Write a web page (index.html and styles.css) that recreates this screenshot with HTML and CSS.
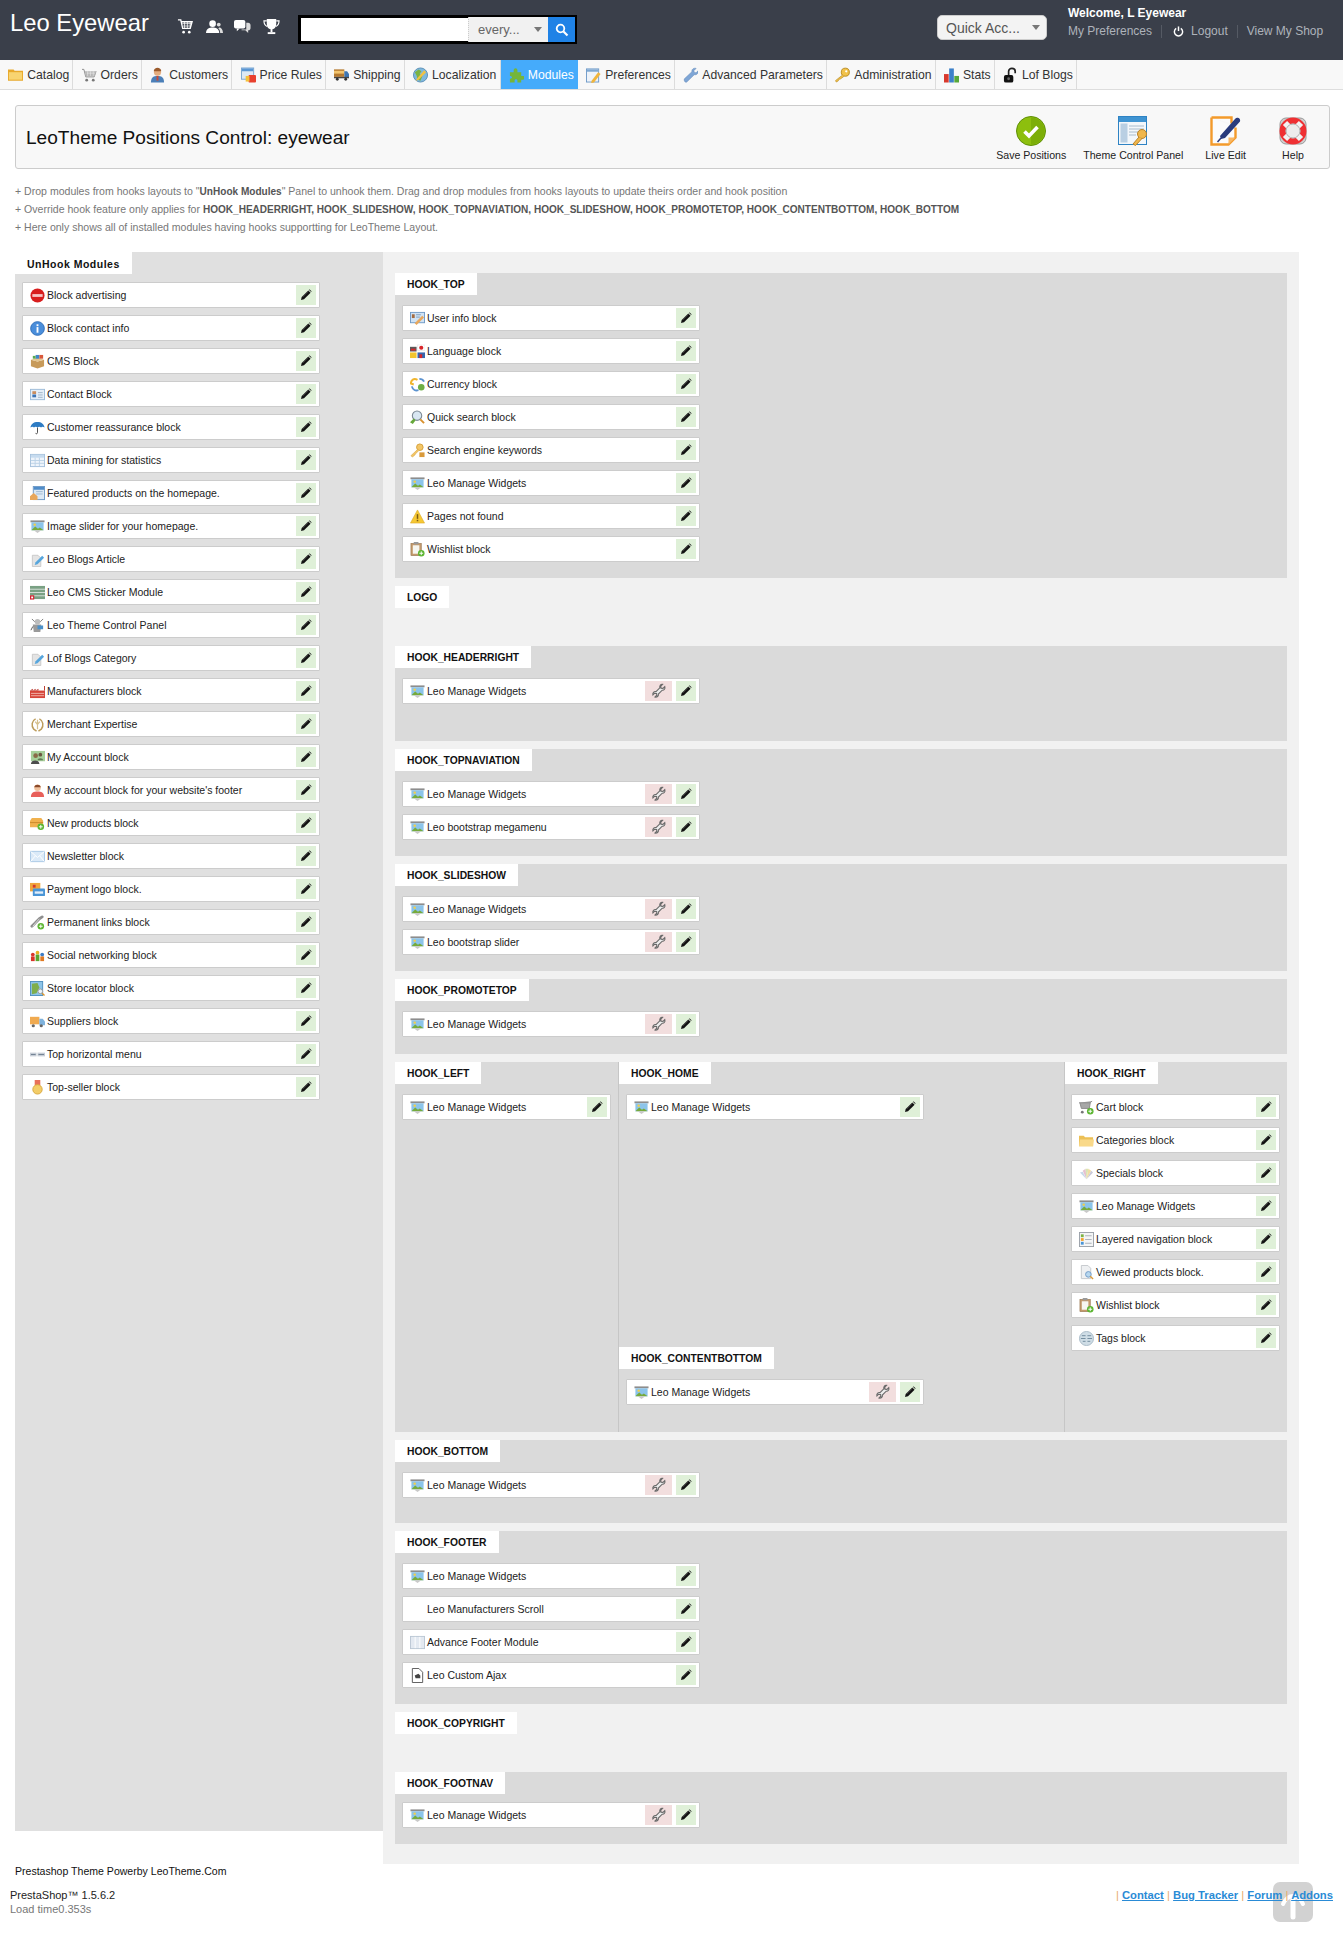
FILE: index.html
```html
<!DOCTYPE html>
<html lang="en">
<head>
  <meta charset="UTF-8">
  <title>LeoTheme Positions Control: eyewear</title>
  <link rel="stylesheet" href="styles.css">
</head>
<body>

<svg class="sprite" xmlns="http://www.w3.org/2000/svg">
  <symbol id="i-pencil" viewBox="0 0 12 12"><path d="M1 11l.7-3 6.6-6.6 2.3 2.3L4 10.3z" fill="#111"/><path d="M8.9.8l.8-.3 1.8 1.8-.3.8z" fill="#111"/><path d="M2.6 8.1l5.7-5.7" stroke="#777" stroke-width=".5"/></symbol>
  <symbol id="i-wrench" viewBox="0 0 16 16"><path d="M11.6 1.4L9.8 3.2l.2 2 2 .2 1.8-1.8c.6 2-.6 3.8-2.6 3.6L7.4 11c.3 2-1.4 3.6-3.4 3l1.8-1.8-.2-1.8-2-.2L1.9 12c-.6-2 1.1-3.8 3.1-3.4l3.8-3.8c-.4-2 1-3.8 2.8-3.4z" fill="#eee" stroke="#6a6a6a" stroke-width="1.1"/></symbol>

  <symbol id="i-adv" viewBox="0 0 16 16"><circle cx="8" cy="8" r="7.5" fill="#d81e1e"/><rect x="2.5" y="6.5" width="11" height="3" fill="#f6c4c4"/></symbol>
  <symbol id="i-info" viewBox="0 0 16 16"><circle cx="8" cy="8" r="7.3" fill="#4a8edb" stroke="#2d6cb8"/><rect x="7" y="3.5" width="2" height="2" fill="#fff"/><rect x="7" y="6.5" width="2" height="6" fill="#fff"/></symbol>
  <symbol id="i-cms" viewBox="0 0 16 16"><path d="M1 6l7 2 7-2v7l-7 2.5L1 13z" fill="#c79a5a"/><path d="M1 6l7-2 7 2-7 2z" fill="#e3c48d"/><rect x="6" y="1" width="4" height="4" fill="#3f86c9"/><rect x="10" y="1" width="4" height="4" fill="#d9583a"/><rect x="3" y="2" width="3" height="3" fill="#5aa84f"/></symbol>
  <symbol id="i-contact" viewBox="0 0 16 16"><rect x=".5" y="2.5" width="15" height="11" fill="#e4eef8" stroke="#9cbbd8"/><rect x="2.5" y="4.5" width="4" height="3" fill="#c98d5e"/><rect x="2.5" y="8" width="4" height="3" fill="#3b73b5"/><path d="M8.5 6h5M8.5 8.5h5M8.5 11h5" stroke="#9fb4c8"/></symbol>
  <symbol id="i-umbrella" viewBox="0 0 16 16"><path d="M8 8v5.5c0 1.5-2 1.5-2 .3" fill="none" stroke="#444"/><path d="M.5 8C1 4 4 2 8 2s7 2 7.5 6c-1.5-1-3-1-3.7 0-1-1-2.8-1-3.8 0-1-1-2.8-1-3.8 0C3.5 7 2 7 .5 8z" fill="#2e7cc4"/></symbol>
  <symbol id="i-data" viewBox="0 0 16 16"><rect x=".5" y="1.5" width="15" height="13" fill="#eef4fb" stroke="#a5c1dc"/><rect x="1" y="2" width="14" height="3" fill="#c6dbef"/><path d="M5.5 5v9M10 5v9M1 8h14M1 11h14" stroke="#bcd2e6"/></symbol>
  <symbol id="i-featured" viewBox="0 0 16 16"><rect x="3.5" y=".5" width="12" height="14" fill="#dbe8f5" stroke="#6f9ac6"/><rect x="4" y="1" width="11" height="3" fill="#4f8cc9"/><path d="M6.5 6h7M6.5 8.5h7" stroke="#9cb8d2"/><path d="M0 11l4-3.5 4 3.5v4H0z" fill="#e8a75c"/></symbol>
  <symbol id="i-slider" viewBox="0 0 16 16"><rect x=".5" y="1.5" width="15" height="2" fill="#8d8d8d"/><rect x="1.5" y="3.5" width="13" height="8.5" fill="#8cc4ea"/><path d="M1.5 12l4-4 3 2.5 2-1.5 4 3z" fill="#76aa3c"/><circle cx="5" cy="6" r="1.3" fill="#f4cf48"/><path d="M4 12h8l-4 3z" fill="#c9c9c9"/></symbol>
  <symbol id="i-blog" viewBox="0 0 16 16"><path d="M2.5 3.5h6l3 3v9h-9z" fill="#e4e4e4" stroke="#c9c9c9"/><path d="M6 11l7-7 2 2-7 7-3 .8z" fill="#57a6dd"/></symbol>
  <symbol id="i-sticker" viewBox="0 0 16 16"><rect y="1" width="16" height="14" fill="#7aa184"/><path d="M0 4.5h16M0 8h16M0 11.5h16" stroke="#d9e2dc"/><rect y="11" width="4.5" height="4.5" fill="#d3202e"/><rect x="1.3" y="12.3" width="2" height="2" fill="#fff"/></symbol>
  <symbol id="i-panel" viewBox="0 0 16 16"><path d="M3 7h9l-1 8H4z" fill="#9a9a9a"/><circle cx="8" cy="4" r="3" fill="#bcbcbc"/><path d="M2 1l3 3M14 1l-3 3" stroke="#777"/><rect x="8" y="8" width="6" height="4" fill="#4a90c9"/><path d="M3 9L1 13" stroke="#555"/></symbol>
  <symbol id="i-factory" viewBox="0 0 16 16"><rect y="7" width="16" height="8" fill="#d6453a"/><path d="M0 7l3-2v2l3-2v2l3-2v2h6V2h1v5z" fill="#b8332a"/><path d="M1 10h14M1 12.5h14" stroke="#f1b5ad"/></symbol>
  <symbol id="i-laurel" viewBox="0 0 16 16"><path d="M6 2C2 4 1 9 4 13l3 2M10 2c4 2 5 7 2 11l-3 2" fill="none" stroke="#bd9d5c" stroke-width="1.6"/><path d="M8 3v10M5.5 5l2.5 3 2.5-3" fill="none" stroke="#d6c08e" stroke-width="1.3"/></symbol>
  <symbol id="i-myacc" viewBox="0 0 16 16"><rect x="1" y="1" width="15" height="11" fill="#a6cf9a"/><circle cx="6" cy="6" r="2.5" fill="#8a6a48"/><path d="M1 15c0-5 9-5 9 0z" fill="#4d4d4d"/><circle cx="11" cy="5" r="2" fill="#6b5640"/><path d="M8 11c0-3 6-3 6 0z" fill="#5f7a55"/></symbol>
  <symbol id="i-fuser" viewBox="0 0 16 16"><path d="M1 15c0-5 3-6 7-6s7 1 7 6z" fill="#e8605a"/><circle cx="8" cy="5" r="3.5" fill="#f0c19c"/><path d="M4.5 4.5C5 1 11 1 11.5 4.5z" fill="#8a4a2a"/></symbol>
  <symbol id="i-newprod" viewBox="0 0 16 16"><path d="M0 5l2-3h10l2 3v7H0z" fill="#f0b14e"/><path d="M0 7h14" stroke="#c98a2c"/><circle cx="11.5" cy="11.5" r="3.5" fill="#5cb531"/><path d="M9.5 11.5h4M11.5 9.5v4" stroke="#fff"/></symbol>
  <symbol id="i-mail" viewBox="0 0 16 16"><rect x=".5" y="2.5" width="15" height="11" fill="#dbeaf8" stroke="#a9c8e6"/><path d="M.5 2.5L8 9l7.5-6.5M.5 13.5l5-6M15.5 13.5l-5-6" fill="none" stroke="#fff"/></symbol>
  <symbol id="i-pay" viewBox="0 0 16 16"><rect x="0" y="1" width="11" height="9" fill="#f0a63c"/><rect x="3" y="3" width="3" height="3" fill="#d3392e"/><rect x="3" y="7" width="13" height="8" rx="1" fill="#4a95d6"/><rect x="5" y="10" width="9" height="2.5" fill="#e2eef9"/></symbol>
  <symbol id="i-link" viewBox="0 0 16 16"><path d="M2 12l3-3M6 8l4-4M10 4l3-2" stroke="#8e8e8e" stroke-width="3" stroke-linecap="round"/><path d="M3 12l7-8" stroke="#dcdcdc"/><circle cx="11.5" cy="12" r="3.5" fill="#5cb531"/><path d="M9.5 12h4M11.5 10v4" stroke="#fff"/></symbol>
  <symbol id="i-social" viewBox="0 0 16 16"><circle cx="3" cy="7" r="2" fill="#d8352a"/><rect x="1" y="9" width="4" height="5" fill="#d8352a"/><circle cx="8" cy="5" r="2" fill="#e9b022"/><rect x="6" y="7" width="4" height="7" fill="#5aa52f"/><circle cx="13" cy="7" r="2" fill="#3c7cc4"/><rect x="11" y="9" width="4" height="5" fill="#e07a22"/></symbol>
  <symbol id="i-map" viewBox="0 0 16 16"><rect x=".5" y=".5" width="13" height="15" fill="#8dc4e8" stroke="#4f8fbe"/><path d="M2 3l6-1 2 5-3 6-5 1z" fill="#7fae4c"/><circle cx="11" cy="11" r="2.5" fill="#e9f2f9" stroke="#9a9a9a"/><path d="M13 13l2.5 2.5" stroke="#e0982c" stroke-width="1.5"/></symbol>
  <symbol id="i-truck" viewBox="0 0 16 16"><rect y="3" width="10" height="8" fill="#f0aa50"/><path d="M10 5h3.5l2.5 3v4h-6z" fill="#7fb2dc"/><circle cx="3.5" cy="12.5" r="1.7" fill="#666"/><circle cx="12" cy="12.5" r="1.7" fill="#666"/></symbol>
  <symbol id="i-menu" viewBox="0 0 16 16"><rect y="6" width="7" height="4" fill="#c6cdd6"/><rect x="8" y="6" width="8" height="4" fill="#c6cdd6"/><path d="M1 8h5M9 8h6" stroke="#6f7f90"/></symbol>
  <symbol id="i-medal" viewBox="0 0 16 16"><path d="M5 0h6v6H5z" fill="#e8705a"/><circle cx="8" cy="10" r="5" fill="#f3cd68" stroke="#d9a93f"/></symbol>
  <symbol id="i-userinfo" viewBox="0 0 16 16"><rect x=".5" y="1.5" width="15" height="11" fill="#cfe2f4" stroke="#6f9ac6"/><rect x="2" y="3.5" width="3" height="4" fill="#a36c42"/><path d="M6.5 4h5M6.5 6.5h4" stroke="#7c9cbc"/><path d="M5 13L13 5l2 2-8 8z" fill="#e8a75c"/></symbol>
  <symbol id="i-lang" viewBox="0 0 16 16"><rect y="3" width="7" height="5" fill="#5a5a5a"/><rect x="8" y="1" width="8" height="6" fill="#fff" stroke="#eee"/><circle cx="12" cy="4" r="2.2" fill="#d8252a"/><rect y="9" width="7" height="6" fill="#f3c52e"/><rect x="8" y="9" width="8" height="6" fill="#3566ad"/><rect x="1" y="5" width="5" height="2" fill="#d8252a"/><rect x="10" y="11" width="3" height="4" fill="#d8252a"/></symbol>
  <symbol id="i-cur" viewBox="0 0 16 16"><path d="M8 3C4 1 1 3 1 7l3 1" fill="none" stroke="#f0b52e" stroke-width="2.2"/><path d="M2 10c1 4 4 5 7 4" fill="none" stroke="#5b92d0" stroke-width="2"/><path d="M10 2c2 0 4 1 5 3" fill="none" stroke="#5b92d0" stroke-width="2"/><circle cx="12" cy="11" r="3.5" fill="#6dae44"/></symbol>
  <symbol id="i-qsearch" viewBox="0 0 16 16"><circle cx="7.5" cy="6" r="5" fill="#d8e6f2" stroke="#7d8a96" stroke-width="1.2"/><path d="M11 10l4 4" stroke="#d8912e" stroke-width="2"/><path d="M0 13l4-4 2 2-3 4z" fill="#66a83a"/></symbol>
  <symbol id="i-keyw" viewBox="0 0 16 16"><circle cx="10.5" cy="4.5" r="3.5" fill="#f3c667" stroke="#d6a03a"/><path d="M8 7l-7 6.5 1.5 1.5L5 13l1-1.5L9.5 8" fill="#f3c667" stroke="#d6a03a" stroke-width=".6"/><rect x="10" y="10" width="5.5" height="5" fill="#d99a3a"/></symbol>
  <symbol id="i-warn" viewBox="0 0 16 16"><path d="M8 1l7.5 14H.5z" fill="#f6c834" stroke="#d9a521" stroke-width=".6"/><rect x="7.2" y="5.5" width="1.6" height="5" fill="#7a5a12"/><rect x="7.2" y="11.5" width="1.6" height="1.6" fill="#7a5a12"/></symbol>
  <symbol id="i-wish" viewBox="0 0 16 16"><rect x="1" y="1.5" width="11" height="13" fill="#c49a6c" stroke="#8f6c45" stroke-width=".6"/><rect x="3" y="3.5" width="7" height="9" fill="#f6f6f0"/><rect x="4" y="0" width="5" height="2.5" fill="#999"/><circle cx="12" cy="12" r="3.5" fill="#5cb531"/><path d="M10 12h4M12 10v4" stroke="#fff"/></symbol>
  <symbol id="i-cartadd" viewBox="0 0 16 16"><path d="M0 3h12l2-2M1 3l1.5 6H11L12 3" fill="#a7a7a7" stroke="#8a8a8a"/><circle cx="3.5" cy="13" r="1.5" fill="#777"/><circle cx="12" cy="12" r="3.5" fill="#5cb531"/><path d="M10 12h4M12 10v4" stroke="#fff"/></symbol>
  <symbol id="i-folder" viewBox="0 0 16 16"><path d="M0 3h5l1.5 1.5H15V14H0z" fill="#ecc056"/><path d="M1 7h15l-1 7H0z" fill="#f9d98a"/></symbol>
  <symbol id="i-special" viewBox="0 0 16 16"><path d="M8 14L1 7l3-1z" fill="#c7d9ea"/><path d="M8 14L4 5l3-2z" fill="#e6c0d0"/><path d="M8 14L7 3h3z" fill="#d9e5b4"/><path d="M8 14l2-11 3 2z" fill="#f2dca4"/><path d="M8 14l5-9 2 2z" fill="#c9c9d9"/></symbol>
  <symbol id="i-layered" viewBox="0 0 16 16"><rect x=".5" y=".5" width="15" height="15" fill="#f4f5f6" stroke="#9aa0a8"/><rect x="2" y="2.5" width="3" height="3" fill="#7cb342"/><rect x="2" y="6.5" width="3" height="3" fill="#f2a22c"/><rect x="2" y="10.5" width="3" height="3" fill="#4a95d6"/><path d="M6.5 4h7M6.5 8h7M6.5 12h7" stroke="#a9afb6"/></symbol>
  <symbol id="i-viewed" viewBox="0 0 16 16"><path d="M2.5.5h7l3 3v11h-10z" fill="#eef0f2" stroke="#c4c8cc"/><circle cx="10" cy="10" r="3" fill="#b6d7ef" stroke="#6f9ac6"/><path d="M12 12l3 3" stroke="#d99a3a" stroke-width="1.5"/></symbol>
  <symbol id="i-tags" viewBox="0 0 16 16"><circle cx="8" cy="8" r="7.5" fill="#cfdde6" stroke="#a7bac6"/><path d="M3 5h4M9 5h4M2 8h5M9 8h5M4 11h3M9 11h3" stroke="#6f8a9c"/></symbol>
  <symbol id="i-cols" viewBox="0 0 16 16"><rect x=".5" y="1.5" width="15" height="13" fill="#e3e9f1" stroke="#bac6d4"/><path d="M5.5 2v12M10.5 2v12" stroke="#fff"/></symbol>
  <symbol id="i-ajax" viewBox="0 0 16 16"><path d="M2.5.5h7l4 4v11h-11z" fill="#fff" stroke="#555"/><path d="M5 8l4-2 2 2v3H6z" fill="#444"/></symbol>

  <symbol id="n-folder" viewBox="0 0 16 16"><path d="M0 2h6l1 1.5h9V14H0z" fill="#e8a92c"/><path d="M1 5h14v8H1z" fill="#f8d471"/></symbol>
  <symbol id="n-cart" viewBox="0 0 16 16"><path d="M0 2h2l2 8h9l2-6" fill="none" stroke="#8a8a8a"/><path d="M3 4h12l-1.5 5H4z" fill="#b7b7b7"/><path d="M5 6h9M6 4v5M9 4v5M12 4v5" stroke="#eee" stroke-width=".6"/><circle cx="5" cy="13.5" r="1.5" fill="#777"/><circle cx="12" cy="13.5" r="1.5" fill="#777"/></symbol>
  <symbol id="n-user" viewBox="0 0 16 16"><path d="M1 16c0-6 3-7 7-7s7 1 7 7z" fill="#4b7fb8"/><circle cx="8" cy="5" r="3.8" fill="#e4ad7f"/><path d="M4 4c0-5 8-5 8 0z" fill="#9b5b2c"/><rect x="7" y="9" width="2" height="5" fill="#c94a36"/></symbol>
  <symbol id="n-price" viewBox="0 0 16 16"><rect x=".5" y=".5" width="13" height="12" fill="#dce9f6" stroke="#7aa5cf"/><rect x="1" y="1" width="12" height="3" fill="#5a97d4"/><rect x="8" y="8" width="8" height="8" rx="1" fill="#e8402e"/><rect x="5" y="9" width="4" height="6" fill="#f4c23c"/></symbol>
  <symbol id="n-truck" viewBox="0 0 16 16"><rect y="2" width="11" height="8" fill="#b5792f"/><rect x="0" y="3.5" width="11" height="3" fill="#f2c46e"/><path d="M11 4h3l2 3v4h-5z" fill="#3e76b3"/><rect y="10" width="16" height="1.5" fill="#444"/><circle cx="3.5" cy="12.5" r="1.5" fill="#333"/><circle cx="12.5" cy="12.5" r="1.5" fill="#333"/></symbol>
  <symbol id="n-globe" viewBox="0 0 16 16"><circle cx="8" cy="8" r="7.5" fill="#7fb8de" stroke="#5a8fb5"/><path d="M2 5l4-3 3 2-2 3 3 2-2 5-3-1-1-4z" fill="#7cb342"/><path d="M4 12l8-9 2 2-8 8-3 1z" fill="#f0c244"/></symbol>
  <symbol id="n-puzzle" viewBox="0 0 16 16"><path d="M1 5h4V3c0-3 4-3 4 0v2h4v4h2c2 0 2 4 0 4h-2v3H9v-2c0-2-3-2-3 0v2H1v-4c3 0 3-3 0-3z" fill="#74b53a"/></symbol>
  <symbol id="n-pref" viewBox="0 0 16 16"><rect x=".5" y="1.5" width="13" height="14" fill="#eef3f9" stroke="#6e9ac8"/><rect x="1" y="2" width="12" height="2.5" fill="#7fa8d2"/><path d="M6 14l7-9 2.5 2-7 9-3 .5z" fill="#f0b53c"/></symbol>
  <symbol id="n-wrench" viewBox="0 0 16 16"><path d="M1.5 12l8-7.5C9 2 11.5 0 14 1l-2.5 2.5.7 1.7 1.8.5L16 3.5c.8 2.5-1.5 4.8-4 4.2L4 15.5c-1.5 1.2-3.5-1.5-2.5-3.500z" fill="#7fa6d6" stroke="#5a82b5" stroke-width=".5"/></symbol>
  <symbol id="n-key" viewBox="0 0 16 16"><circle cx="11" cy="5" r="4.3" fill="#f1c24a" stroke="#b98a1e"/><circle cx="12" cy="4" r="1.2" fill="#fff"/><path d="M8 8L.5 14l1 1.5 2-1.3.7-1.7 1.6-.3L9.5 9.5" fill="#f1c24a" stroke="#b98a1e" stroke-width=".7"/></symbol>
  <symbol id="n-stats" viewBox="0 0 16 16"><rect y="7" width="5" height="9" fill="#d8392c"/><rect x="5.5" y="1" width="5" height="15" fill="#3c80c9"/><rect x="11" y="9" width="5" height="7" fill="#58a83a"/></symbol>
  <symbol id="n-lock" viewBox="0 0 16 16"><path d="M6 8V4c0-4 7-4 7 0v2" fill="none" stroke="#222" stroke-width="1.8"/><rect x="1" y="8" width="10" height="8" rx="2" fill="#111"/><circle cx="6" cy="12" r="1.5" fill="#666"/></symbol>
</svg>

<header class="topbar">
  <div class="brand">Leo Eyewear</div>
  <div class="quick-icons">
    <svg viewBox="0 0 18 18"><path d="M1 2h3l2 9h8l2-7H5" fill="none" stroke="#fff" stroke-width="1.4"/><path d="M5.5 6h10M6.5 8.5h8M8 4v7M11 4v7M14 4v7" stroke="#fff" stroke-width=".8"/><circle cx="7" cy="15" r="1.4" fill="#fff"/><circle cx="13" cy="15" r="1.4" fill="#fff"/></svg>
    <svg viewBox="0 0 18 18"><circle cx="7" cy="6" r="3.5" fill="#fff"/><path d="M0 16c0-5 4-6 7-6s7 1 7 6z" fill="#fff"/><circle cx="13.5" cy="7" r="2" fill="#ddd"/><path d="M14 10c2 0 4 2 4 6h-3c0-2-.5-4-2-5z" fill="#ddd"/></svg>
    <svg viewBox="0 0 18 18"><rect x="0" y="2" width="12" height="9" rx="2" fill="#fff"/><path d="M3 11v3l3-3z" fill="#fff"/><path d="M13 5h2c1.5 0 2.5 1 2.5 2.5v3c0 1.5-1 2.5-2.5 2.5v3l-3-3H8v-.9h5z" fill="#ddd"/></svg>
    <svg viewBox="0 0 18 18"><path d="M4 1h10v5c0 4-2 6-5 6S4 10 4 6z" fill="#fff"/><path d="M4 3H1c0 4 1 5 3.5 6M14 3h3c0 4-1 5-3.5 6" fill="none" stroke="#fff" stroke-width="1.2"/><rect x="8" y="11" width="2" height="4" fill="#fff"/><rect x="5" y="15" width="8" height="2" fill="#fff"/></svg>
  </div>
  <div class="search">
    <div class="search-input"></div>
    <div class="search-select">every...<span class="caret"></span></div>
    <div class="search-btn"><svg viewBox="0 0 14 14"><circle cx="5.5" cy="5.5" r="3.8" fill="none" stroke="#fff" stroke-width="1.8"/><path d="M8.5 8.5l4 4" stroke="#fff" stroke-width="2.2"/></svg></div>
  </div>
  <div class="quick-access">Quick Acc...<span class="caret"></span></div>
  <div class="employee">
    <div class="welcome">Welcome, L Eyewear</div>
    <div class="employee-links">
      <a class="emp-link">My Preferences</a>
      <span class="emp-sep"></span>
      <svg class="power" viewBox="0 0 12 12"><path d="M3.5 2.6a4.5 4.5 0 1 0 5 0" fill="none" stroke="#fff" stroke-width="1.6"/><path d="M6 .5v5" stroke="#fff" stroke-width="1.6"/></svg>
      <a class="emp-link">Logout</a>
      <span class="emp-sep"></span>
      <a class="emp-link">View My Shop</a>
    </div>
  </div>
</header>

<nav class="menu">
  <a class="tab"><svg class="nav-ico"><use href="#n-folder"/></svg>Catalog</a>
  <a class="tab"><svg class="nav-ico"><use href="#n-cart"/></svg>Orders</a>
  <a class="tab"><svg class="nav-ico"><use href="#n-user"/></svg>Customers</a>
  <a class="tab"><svg class="nav-ico"><use href="#n-price"/></svg>Price Rules</a>
  <a class="tab"><svg class="nav-ico"><use href="#n-truck"/></svg>Shipping</a>
  <a class="tab"><svg class="nav-ico"><use href="#n-globe"/></svg>Localization</a>
  <a class="tab active"><svg class="nav-ico"><use href="#n-puzzle"/></svg>Modules</a>
  <a class="tab"><svg class="nav-ico"><use href="#n-pref"/></svg>Preferences</a>
  <a class="tab"><svg class="nav-ico"><use href="#n-wrench"/></svg>Advanced Parameters</a>
  <a class="tab"><svg class="nav-ico"><use href="#n-key"/></svg>Administration</a>
  <a class="tab"><svg class="nav-ico"><use href="#n-stats"/></svg>Stats</a>
  <a class="tab"><svg class="nav-ico"><use href="#n-lock"/></svg>Lof Blogs</a>
</nav>

<main class="content">
  <div class="page-title">
    <h1>LeoTheme Positions Control: eyewear</h1>
    <div class="toolbar">
      <a class="tool">
        <svg viewBox="0 0 30 30"><circle cx="15" cy="15" r="14.5" fill="#8dbf0e" stroke="#5f8f08"/><path d="M15 1.5a13.5 13.5 0 0 1 0 27" fill="#7cae08"/><path d="M8.5 15.5l4.5 4.5 8.5-9" fill="none" stroke="#fff" stroke-width="3.6"/></svg>
        Save Positions
      </a>
      <a class="tool">
        <svg viewBox="0 0 30 30"><rect x=".5" y=".5" width="28" height="28" fill="#f3f7fb" stroke="#2e83c4"/><rect x="1" y="1" width="27" height="5" fill="#3f94d2"/><rect x="2.5" y="7.5" width="7" height="19" fill="#b9cfe3"/><path d="M11 10h15M11 13h15M11 16h11M11 19h7" stroke="#a9bccd"/><circle cx="24" cy="18" r="4.5" fill="#f0b74c" stroke="#b9822a"/><path d="M21 21l-6 7 2.5 1.5 6-6.5" fill="#f0b74c" stroke="#b9822a"/></svg>
        Theme Control Panel
      </a>
      <a class="tool tool-live">
        <svg viewBox="0 0 32 30"><path d="M1.5 1.5h20v6M1.5 1.5v27h17l7-7v-10" fill="#fbfbfb" stroke="#f39a2b" stroke-width="2.4"/><path d="M18.5 28.5v-7h7z" fill="#f8b765"/><path d="M10 20L25 3c2-2.5 6-.5 5 2.5L15 22l-4 1z" fill="#2a3b7c"/><path d="M11 22l-3.5 4" stroke="#2a3b7c" stroke-width="1.5"/></svg>
        Live Edit
      </a>
      <a class="tool tool-help">
        <svg viewBox="0 0 30 30"><rect x="2" y="2" width="26" height="26" rx="6" fill="#cfcfcf" stroke="#9a9a9a"/><circle cx="15" cy="15" r="10.5" fill="none" stroke="#ef3033" stroke-width="6"/><path d="M7 7l4 4M23 7l-4 4M7 23l4-4M23 23l-4-4" stroke="#f2f2f2" stroke-width="6"/><circle cx="15" cy="15" r="7" fill="#ededed" stroke="#a5a5a5" stroke-width=".8"/></svg>
        Help
      </a>
    </div>
  </div>

  <div class="help-text">
    <p>+ Drop modules from hooks layouts to "<b>UnHook Modules</b>" Panel to unhook them. Drag and drop modules from hooks layouts to update theirs order and hook position</p>
    <p>+ Override hook feature only applies for <b>HOOK_HEADERRIGHT, HOOK_SLIDESHOW, HOOK_TOPNAVIATION, HOOK_SLIDESHOW, HOOK_PROMOTETOP, HOOK_CONTENTBOTTOM, HOOK_BOTTOM</b></p>
    <p>+ Here only shows all of installed modules having hooks supportting for LeoTheme Layout.</p>
  </div>

  <div class="positions">
    <div class="left-col">
      <section class="unhook">
        <h4 class="hook-tab">UnHook Modules</h4>
        <div class="rows">
          <div class="mod"><svg class="ico"><use href="#i-adv"/></svg><span class="mod-name">Block advertising</span><a class="edit"><svg><use href="#i-pencil"/></svg></a></div>
          <div class="mod"><svg class="ico"><use href="#i-info"/></svg><span class="mod-name">Block contact info</span><a class="edit"><svg><use href="#i-pencil"/></svg></a></div>
          <div class="mod"><svg class="ico"><use href="#i-cms"/></svg><span class="mod-name">CMS Block</span><a class="edit"><svg><use href="#i-pencil"/></svg></a></div>
          <div class="mod"><svg class="ico"><use href="#i-contact"/></svg><span class="mod-name">Contact Block</span><a class="edit"><svg><use href="#i-pencil"/></svg></a></div>
          <div class="mod"><svg class="ico"><use href="#i-umbrella"/></svg><span class="mod-name">Customer reassurance block</span><a class="edit"><svg><use href="#i-pencil"/></svg></a></div>
          <div class="mod"><svg class="ico"><use href="#i-data"/></svg><span class="mod-name">Data mining for statistics</span><a class="edit"><svg><use href="#i-pencil"/></svg></a></div>
          <div class="mod"><svg class="ico"><use href="#i-featured"/></svg><span class="mod-name">Featured products on the homepage.</span><a class="edit"><svg><use href="#i-pencil"/></svg></a></div>
          <div class="mod"><svg class="ico"><use href="#i-slider"/></svg><span class="mod-name">Image slider for your homepage.</span><a class="edit"><svg><use href="#i-pencil"/></svg></a></div>
          <div class="mod"><svg class="ico"><use href="#i-blog"/></svg><span class="mod-name">Leo Blogs Article</span><a class="edit"><svg><use href="#i-pencil"/></svg></a></div>
          <div class="mod"><svg class="ico"><use href="#i-sticker"/></svg><span class="mod-name">Leo CMS Sticker Module</span><a class="edit"><svg><use href="#i-pencil"/></svg></a></div>
          <div class="mod"><svg class="ico"><use href="#i-panel"/></svg><span class="mod-name">Leo Theme Control Panel</span><a class="edit"><svg><use href="#i-pencil"/></svg></a></div>
          <div class="mod"><svg class="ico"><use href="#i-blog"/></svg><span class="mod-name">Lof Blogs Category</span><a class="edit"><svg><use href="#i-pencil"/></svg></a></div>
          <div class="mod"><svg class="ico"><use href="#i-factory"/></svg><span class="mod-name">Manufacturers block</span><a class="edit"><svg><use href="#i-pencil"/></svg></a></div>
          <div class="mod"><svg class="ico"><use href="#i-laurel"/></svg><span class="mod-name">Merchant Expertise</span><a class="edit"><svg><use href="#i-pencil"/></svg></a></div>
          <div class="mod"><svg class="ico"><use href="#i-myacc"/></svg><span class="mod-name">My Account block</span><a class="edit"><svg><use href="#i-pencil"/></svg></a></div>
          <div class="mod"><svg class="ico"><use href="#i-fuser"/></svg><span class="mod-name">My account block for your website's footer</span><a class="edit"><svg><use href="#i-pencil"/></svg></a></div>
          <div class="mod"><svg class="ico"><use href="#i-newprod"/></svg><span class="mod-name">New products block</span><a class="edit"><svg><use href="#i-pencil"/></svg></a></div>
          <div class="mod"><svg class="ico"><use href="#i-mail"/></svg><span class="mod-name">Newsletter block</span><a class="edit"><svg><use href="#i-pencil"/></svg></a></div>
          <div class="mod"><svg class="ico"><use href="#i-pay"/></svg><span class="mod-name">Payment logo block.</span><a class="edit"><svg><use href="#i-pencil"/></svg></a></div>
          <div class="mod"><svg class="ico"><use href="#i-link"/></svg><span class="mod-name">Permanent links block</span><a class="edit"><svg><use href="#i-pencil"/></svg></a></div>
          <div class="mod"><svg class="ico"><use href="#i-social"/></svg><span class="mod-name">Social networking block</span><a class="edit"><svg><use href="#i-pencil"/></svg></a></div>
          <div class="mod"><svg class="ico"><use href="#i-map"/></svg><span class="mod-name">Store locator block</span><a class="edit"><svg><use href="#i-pencil"/></svg></a></div>
          <div class="mod"><svg class="ico"><use href="#i-truck"/></svg><span class="mod-name">Suppliers block</span><a class="edit"><svg><use href="#i-pencil"/></svg></a></div>
          <div class="mod"><svg class="ico"><use href="#i-menu"/></svg><span class="mod-name">Top horizontal menu</span><a class="edit"><svg><use href="#i-pencil"/></svg></a></div>
          <div class="mod"><svg class="ico"><use href="#i-medal"/></svg><span class="mod-name">Top-seller block</span><a class="edit"><svg><use href="#i-pencil"/></svg></a></div>
        </div>
      </section>
      <p class="credit">Prestashop Theme Powerby LeoTheme.Com</p>
    </div>

    <div class="right-col">
      <section class="hook filled">
        <h4 class="hook-tab">HOOK_TOP</h4>
        <div class="rows">
          <div class="mod"><svg class="ico"><use href="#i-userinfo"/></svg><span class="mod-name">User info block</span><a class="edit"><svg><use href="#i-pencil"/></svg></a></div>
          <div class="mod"><svg class="ico"><use href="#i-lang"/></svg><span class="mod-name">Language block</span><a class="edit"><svg><use href="#i-pencil"/></svg></a></div>
          <div class="mod"><svg class="ico"><use href="#i-cur"/></svg><span class="mod-name">Currency block</span><a class="edit"><svg><use href="#i-pencil"/></svg></a></div>
          <div class="mod"><svg class="ico"><use href="#i-qsearch"/></svg><span class="mod-name">Quick search block</span><a class="edit"><svg><use href="#i-pencil"/></svg></a></div>
          <div class="mod"><svg class="ico"><use href="#i-keyw"/></svg><span class="mod-name">Search engine keywords</span><a class="edit"><svg><use href="#i-pencil"/></svg></a></div>
          <div class="mod"><svg class="ico"><use href="#i-slider"/></svg><span class="mod-name">Leo Manage Widgets</span><a class="edit"><svg><use href="#i-pencil"/></svg></a></div>
          <div class="mod"><svg class="ico"><use href="#i-warn"/></svg><span class="mod-name">Pages not found</span><a class="edit"><svg><use href="#i-pencil"/></svg></a></div>
          <div class="mod"><svg class="ico"><use href="#i-wish"/></svg><span class="mod-name">Wishlist block</span><a class="edit"><svg><use href="#i-pencil"/></svg></a></div>
        </div>
      </section>

      <section class="hook empty">
        <h4 class="hook-tab">LOGO</h4>
      </section>

      <section class="hook filled tall">
        <h4 class="hook-tab">HOOK_HEADERRIGHT</h4>
        <div class="rows">
          <div class="mod"><svg class="ico"><use href="#i-slider"/></svg><span class="mod-name">Leo Manage Widgets</span><a class="override"><svg><use href="#i-wrench"/></svg></a><a class="edit"><svg><use href="#i-pencil"/></svg></a></div>
        </div>
      </section>

      <section class="hook filled">
        <h4 class="hook-tab">HOOK_TOPNAVIATION</h4>
        <div class="rows">
          <div class="mod"><svg class="ico"><use href="#i-slider"/></svg><span class="mod-name">Leo Manage Widgets</span><a class="override"><svg><use href="#i-wrench"/></svg></a><a class="edit"><svg><use href="#i-pencil"/></svg></a></div>
          <div class="mod"><svg class="ico"><use href="#i-slider"/></svg><span class="mod-name">Leo bootstrap megamenu</span><a class="override"><svg><use href="#i-wrench"/></svg></a><a class="edit"><svg><use href="#i-pencil"/></svg></a></div>
        </div>
      </section>

      <section class="hook filled">
        <h4 class="hook-tab">HOOK_SLIDESHOW</h4>
        <div class="rows">
          <div class="mod"><svg class="ico"><use href="#i-slider"/></svg><span class="mod-name">Leo Manage Widgets</span><a class="override"><svg><use href="#i-wrench"/></svg></a><a class="edit"><svg><use href="#i-pencil"/></svg></a></div>
          <div class="mod"><svg class="ico"><use href="#i-slider"/></svg><span class="mod-name">Leo bootstrap slider</span><a class="override"><svg><use href="#i-wrench"/></svg></a><a class="edit"><svg><use href="#i-pencil"/></svg></a></div>
        </div>
      </section>

      <section class="hook filled promote">
        <h4 class="hook-tab">HOOK_PROMOTETOP</h4>
        <div class="rows">
          <div class="mod"><svg class="ico"><use href="#i-slider"/></svg><span class="mod-name">Leo Manage Widgets</span><a class="override"><svg><use href="#i-wrench"/></svg></a><a class="edit"><svg><use href="#i-pencil"/></svg></a></div>
        </div>
      </section>

      <div class="hook-columns">
        <section class="col">
          <h4 class="hook-tab">HOOK_LEFT</h4>
          <div class="rows">
            <div class="mod"><svg class="ico"><use href="#i-slider"/></svg><span class="mod-name">Leo Manage Widgets</span><a class="edit"><svg><use href="#i-pencil"/></svg></a></div>
          </div>
        </section>
        <div class="col col-mid">
          <section class="col-home">
            <h4 class="hook-tab">HOOK_HOME</h4>
            <div class="rows">
              <div class="mod"><svg class="ico"><use href="#i-slider"/></svg><span class="mod-name">Leo Manage Widgets</span><a class="edit"><svg><use href="#i-pencil"/></svg></a></div>
            </div>
          </section>
          <section>
            <h4 class="hook-tab">HOOK_CONTENTBOTTOM</h4>
            <div class="rows">
              <div class="mod"><svg class="ico"><use href="#i-slider"/></svg><span class="mod-name">Leo Manage Widgets</span><a class="override"><svg><use href="#i-wrench"/></svg></a><a class="edit"><svg><use href="#i-pencil"/></svg></a></div>
            </div>
          </section>
        </div>
        <section class="col col-side">
          <h4 class="hook-tab">HOOK_RIGHT</h4>
          <div class="rows">
            <div class="mod"><svg class="ico"><use href="#i-cartadd"/></svg><span class="mod-name">Cart block</span><a class="edit"><svg><use href="#i-pencil"/></svg></a></div>
            <div class="mod"><svg class="ico"><use href="#i-folder"/></svg><span class="mod-name">Categories block</span><a class="edit"><svg><use href="#i-pencil"/></svg></a></div>
            <div class="mod"><svg class="ico"><use href="#i-special"/></svg><span class="mod-name">Specials block</span><a class="edit"><svg><use href="#i-pencil"/></svg></a></div>
            <div class="mod"><svg class="ico"><use href="#i-slider"/></svg><span class="mod-name">Leo Manage Widgets</span><a class="edit"><svg><use href="#i-pencil"/></svg></a></div>
            <div class="mod"><svg class="ico"><use href="#i-layered"/></svg><span class="mod-name">Layered navigation block</span><a class="edit"><svg><use href="#i-pencil"/></svg></a></div>
            <div class="mod"><svg class="ico"><use href="#i-viewed"/></svg><span class="mod-name">Viewed products block.</span><a class="edit"><svg><use href="#i-pencil"/></svg></a></div>
            <div class="mod"><svg class="ico"><use href="#i-wish"/></svg><span class="mod-name">Wishlist block</span><a class="edit"><svg><use href="#i-pencil"/></svg></a></div>
            <div class="mod"><svg class="ico"><use href="#i-tags"/></svg><span class="mod-name">Tags block</span><a class="edit"><svg><use href="#i-pencil"/></svg></a></div>
          </div>
        </section>
      </div>

      <section class="hook filled bottom">
        <h4 class="hook-tab">HOOK_BOTTOM</h4>
        <div class="rows">
          <div class="mod"><svg class="ico"><use href="#i-slider"/></svg><span class="mod-name">Leo Manage Widgets</span><a class="override"><svg><use href="#i-wrench"/></svg></a><a class="edit"><svg><use href="#i-pencil"/></svg></a></div>
        </div>
      </section>

      <section class="hook filled">
        <h4 class="hook-tab">HOOK_FOOTER</h4>
        <div class="rows">
          <div class="mod"><svg class="ico"><use href="#i-slider"/></svg><span class="mod-name">Leo Manage Widgets</span><a class="edit"><svg><use href="#i-pencil"/></svg></a></div>
          <div class="mod"><span class="ico"></span><span class="mod-name">Leo Manufacturers Scroll</span><a class="edit"><svg><use href="#i-pencil"/></svg></a></div>
          <div class="mod"><svg class="ico"><use href="#i-cols"/></svg><span class="mod-name">Advance Footer Module</span><a class="edit"><svg><use href="#i-pencil"/></svg></a></div>
          <div class="mod"><svg class="ico"><use href="#i-ajax"/></svg><span class="mod-name">Leo Custom Ajax</span><a class="edit"><svg><use href="#i-pencil"/></svg></a></div>
        </div>
      </section>

      <section class="hook empty">
        <h4 class="hook-tab">HOOK_COPYRIGHT</h4>
      </section>

      <section class="hook filled footnav">
        <h4 class="hook-tab">HOOK_FOOTNAV</h4>
        <div class="rows">
          <div class="mod"><svg class="ico"><use href="#i-slider"/></svg><span class="mod-name">Leo Manage Widgets</span><a class="override"><svg><use href="#i-wrench"/></svg></a><a class="edit"><svg><use href="#i-pencil"/></svg></a></div>
        </div>
      </section>
    </div>
  </div>
</main>

<footer class="foot">
  <div class="foot-info">
    <div>PrestaShop™ 1.5.6.2</div>
    <div class="load-time">Load time0.353s</div>
  </div>
  <div class="foot-links">
    <span>|</span> <a>Contact</a> <span>|</span> <a>Bug Tracker</a> <span>|</span> <a>Forum</a> <span>|</span> <a>Addons</a>
  </div>
  <div class="scroll-top"><svg viewBox="0 0 40 40"><path d="M20 17v18" stroke="#fff" stroke-width="5" stroke-linecap="round"/><path d="M10 22c3-6 6-8 10-8s7 2 10 8" fill="none" stroke="#fff" stroke-width="4" stroke-linecap="round"/></svg></div>
</footer>

</body>
</html>
```

FILE: styles.css
```css
body {
  font-family: "Liberation Sans", Arial, sans-serif;
  background: #fff;
  color: #111;
  margin: 0;
  padding: 0;
  font-size: 12px;
}
h1, h4, p { margin: 0; }
.sprite { display: none; }

/* top bar */
.topbar {
  background: #3a3f4a;
  height: 60px;
  display: flex;
  align-items: flex-start;
  color: #fff;
}
.brand {
  font-size: 23.8px;
  margin: 9px 0 0 10px;
  width: 167px;
}
.quick-icons {
  display: flex;
  gap: 11.5px;
  margin-top: 18px;
  width: 121px;
}
.quick-icons svg { width: 17px; height: 17px; }
.search {
  width: 279px;
  height: 29px;
  box-sizing: border-box;
  margin-top: 15px;
  border: 2px solid #000;
  background: #fff;
  display: flex;
  box-shadow: 0 0 0 1px #000 inset;
}
.search-input { flex: 1; }
.search-select {
  width: 80px;
  background: #f1f1f1;
  color: #666;
  font-size: 13px;
  line-height: 25px;
  padding-left: 9px;
  box-sizing: border-box;
  display: flex;
  justify-content: space-between;
  align-items: center;
  border-left: 1px dotted #ccc;
}
.search-btn {
  width: 27px;
  background: #1f82e6;
  display: flex;
  align-items: center;
  justify-content: center;
}
.search-btn svg { width: 14px; height: 14px; }
.caret {
  width: 0;
  height: 0;
  border-left: 4px solid transparent;
  border-right: 4px solid transparent;
  border-top: 5px solid #777;
  margin-right: 6px;
}
.quick-access {
  margin: 15px 0 0 360px;
  width: 110px;
  height: 25px;
  box-sizing: border-box;
  padding: 0 6px 0 8px;
  background: #f3f3f3;
  border: 1px solid #ccc;
  border-radius: 5px;
  color: #555;
  font-size: 14px;
  display: flex;
  align-items: center;
  justify-content: space-between;
}
.quick-access .caret { margin-right: 0; }
.employee { margin: 6px 0 0 21px; }
.welcome { font-weight: bold; font-size: 12px; line-height: 14px; }
.employee-links {
  display: flex;
  align-items: center;
  margin-top: 3px;
  height: 16px;
  color: #aeb3bb;
}
.emp-sep {
  width: 1px;
  height: 13px;
  background: #555a64;
  margin: 0 9px;
}
.power { width: 11px; height: 11px; margin: 0 7px 0 2px; }

/* main menu */
.menu {
  display: flex;
  height: 29px;
  background: #f8f8f8;
  border-bottom: 1px solid #ddd;
}
.tab {
  display: flex;
  align-items: center;
  gap: 4px;
  padding: 0 3.2px 0 8.2px;
  border-right: 1px solid #dcdcdc;
  color: #333;
  font-size: 12.2px;
}
.tab.active {
  background: #45abfb;
  color: #fff;
  border-right-color: #45abfb;
}
.nav-ico { width: 15px; height: 16px; }

/* page title */
.content { padding: 0 13px 0 15px; }
.page-title {
  height: 64px;
  margin-top: 15px;
  box-sizing: border-box;
  background: #f8f8f8;
  border: 1px solid #ccc;
  border-radius: 3px;
  display: flex;
  justify-content: space-between;
  align-items: center;
  padding: 0 21px 0 10px;
}
h1 { font-size: 19.1px; font-weight: normal; color: #111; margin-top: 2px; }
.toolbar { display: flex; align-items: flex-start; padding-top: 4px; }
.tool {
  display: flex;
  flex-direction: column;
  align-items: center;
  gap: 3px;
  font-size: 10.6px;
  line-height: 13px;
  margin-left: 17px;
  color: #222;
  white-space: nowrap;
}
.tool svg { width: 30px; height: 30px; }
.tool-live { margin-left: 22px; }
.tool-live svg { width: 32px; }
.tool-help { margin-left: 32px; }

.help-text {
  margin-top: 13px;
  color: #777;
  font-size: 10.55px;
  line-height: 18px;
}
.help-text p { height: 18px; }
.help-text b { color: #555; font-size: 10.05px; }

/* positions */
.positions {
  display: flex;
  margin-top: 16px;
  align-items: flex-start;
}
.left-col { width: 368px; }
.unhook {
  background: #e0e0e0;
  height: 1579px;
}
.unhook .hook-tab { width: 117px; font-size: 10.5px; letter-spacing: .5px; }
.unhook .rows { padding-top: 8px; }
.credit {
  margin-top: 33px;
  font-size: 10.55px;
  line-height: 14px;
}
.right-col {
  width: 916px;
  background: #f1f1f1;
  box-sizing: border-box;
  padding: 21px 12px 20px;
}
.hook-tab {
  width: fit-content;
  box-sizing: border-box;
  background: #fff;
  height: 22px;
  line-height: 22px;
  padding: 1px 12px 0;
  font-size: 10.3px;
  font-weight: bold;
  color: #111;
}
.rows { padding: 10px 7px 9px; }
.hook { margin-bottom: 8px; }
.hook.filled { background: #dadada; }
.hook.empty { height: 52px; }
.hook.tall { height: 95px; }
.hook.promote { height: 75px; }
.hook.bottom { height: 83px; }
.hook.footnav { height: 72px; margin-bottom: 0; }
.hook.footnav .rows { padding-top: 8px; }

.mod {
  display: flex;
  align-items: center;
  width: 298px;
  height: 26px;
  box-sizing: border-box;
  margin-bottom: 7px;
  padding: 0 3px 0 7px;
  background: #fff;
  border: 1px solid #ccc;
  border-radius: 1px;
  font-size: 10.5px;
  color: #222;
}
.ico { display: block; width: 15px; height: 15px; margin-right: 2px; flex-shrink: 0; }
.mod-name { flex: 1; white-space: nowrap; }
.edit, .override {
  display: flex;
  align-items: center;
  justify-content: center;
  height: 20px;
}
.edit { width: 20px; background: #dff0d8; }
.edit svg { width: 12px; height: 12px; }
.override { width: 27px; margin-right: 4px; background: #f2dede; }
.override svg { width: 16px; height: 16px; }

.hook-columns {
  display: grid;
  grid-template-columns: 223px 1fr 223px;
  background: #dadada;
  height: 370px;
  margin-bottom: 8px;
}
.col .mod { width: auto; }
.col-mid { border-left: 1px solid #c6c6c6; }
.col-mid .mod { width: 298px; }
.col-home { height: 285px; }
.col-side { border-left: 1px solid #c6c6c6; }
.col-side .rows { padding-left: 6px; }

/* footer */
.foot {
  position: relative;
  display: flex;
  justify-content: space-between;
  padding: 10px 10px 0 10px;
  height: 73px;
  box-sizing: border-box;
}
.foot-info { font-size: 11px; line-height: 14px; color: #222; }
.load-time { color: #777; }
.foot-links {
  position: relative;
  z-index: 1;
  font-size: 11.25px;
  font-weight: bold;
  line-height: 14px;
}
.foot-links span { color: #e8ab6c; font-weight: normal; }
.foot-links a { color: #2a8bd6; text-decoration: underline; }
.scroll-top {
  position: absolute;
  left: 1273px;
  top: 4px;
  width: 40px;
  height: 40px;
  background: #d2d2d2;
  border-radius: 7px;
}
.scroll-top svg { display: block; }
```
